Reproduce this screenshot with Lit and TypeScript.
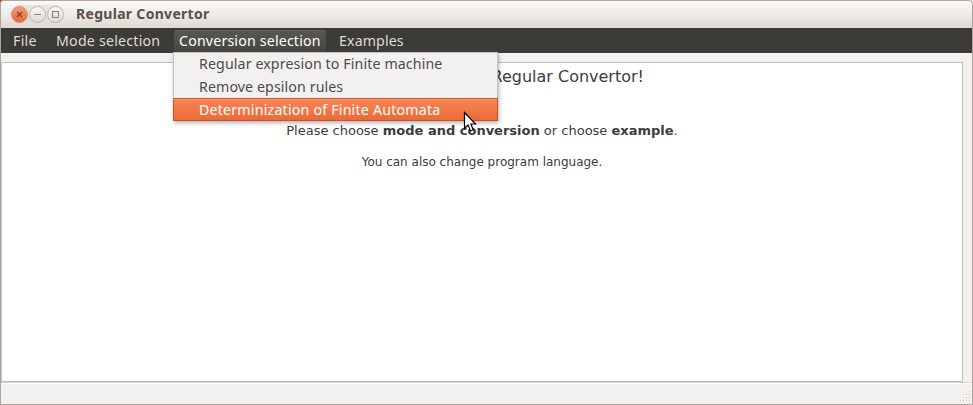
import { LitElement, html, css, svg } from "lit";
import { customElement } from "lit/decorators.js";
import { classMap } from "lit/directives/class-map.js";

interface Label {
  text: string;
  spacing: number;
}

const MENUS: Label[] = [
  { text: "File", spacing: 0.3 },
  { text: "Mode selection", spacing: 0.22 },
  { text: "Conversion selection", spacing: 0.17 },
  { text: "Examples", spacing: 0.12 },
];

const CONVERSIONS: Label[] = [
  { text: "Regular expresion to Finite machine", spacing: 0.115 },
  { text: "Remove epsilon rules", spacing: 0.1 },
  { text: "Determinization of Finite Automata", spacing: 0.205 },
];

const OPEN = 2;
const HOVERED = 2;

@customElement("title-bar")
export class TitleBar extends LitElement {
  static styles = css`
    :host {
      display: flex;
      align-items: flex-start;
      height: 27px;
      box-sizing: border-box;
      padding: 3px 0 0 9px;
      background: linear-gradient(#faf9f7, #f0ede9 45%, #ded7cf);
    }
    .buttons { display: block; flex: none; }
    .title {
      margin-left: 11px;
      font: bold 14px/20px "Noto Sans", sans-serif;
      letter-spacing: 0.3px;
      color: #5a514b;
      white-space: pre;
    }
  `;
  render() {
    return html`
      <svg class="buttons" width="55" height="20" viewBox="0 0 55 20">
        <defs>
          <linearGradient id="close" x1="0" y1="0" x2="0" y2="1">
            <stop offset="0" stop-color="#fa9878" />
            <stop offset="1" stop-color="#ee6535" />
          </linearGradient>
          <linearGradient id="plain" x1="0" y1="0" x2="0" y2="1">
            <stop offset="0" stop-color="#faf9f8" />
            <stop offset="1" stop-color="#ddd8d2" />
          </linearGradient>
        </defs>
        <rect x="0.5" y="1" width="54" height="19" rx="9" fill="#e2ddd7" opacity=".7" />
        ${[9.5, 27.5, 45.5].map(
          (x, i) => svg`<circle cx=${x} cy="10.5" r="8" fill=${i ? "url(#plain)" : "url(#close)"}
            stroke=${i ? "#bdb6ae" : "#c09a86"} stroke-width="1" />`
        )}
        <path d="M7 8l5 5M12 8l-5 5" stroke="#7a4530" stroke-width="1.2" />
        <path d="M24 10.5h7" stroke="#8a847d" stroke-width="1.1" />
        <rect x="42.5" y="7.5" width="6" height="6" fill="none" stroke="#8a847d" stroke-width="1.1" />
      </svg>
      <span class="title">Regular Convertor</span>
    `;
  }
}

@customElement("menu-bar")
export class MenuBar extends LitElement {
  static styles = css`
    :host {
      display: flex;
      height: 25px;
      box-sizing: border-box;
      padding: 2px 0 0 6px;
      background: #3c3b37;
      font: 14.2px/22px "Noto Sans", sans-serif;
      color: #dfdbd2;
    }
    .item {
      position: relative;
      box-sizing: border-box;
      height: 23px;
      padding-left: 6px;
      white-space: nowrap;
    }
    .m0 { width: 43px; }
    .m1 { width: 124px; }
    .m2 { width: 152px; margin-right: 7px; }
    .open {
      padding-left: 5px;
      border-radius: 3px 3px 0 0;
      background: linear-gradient(#585752, #464540);
      box-shadow: inset 0 1px #605f59;
      color: #fff;
    }
    .popup {
      position: absolute;
      z-index: 1;
      left: -1px;
      top: 22px;
      width: 325px;
      height: 69px;
      box-sizing: border-box;
      border: 1px solid #c4c1bc;
      background: #f2f1f0;
      box-shadow: 1px 2px 4px rgba(0, 0, 0, 0.3);
      color: #4c4c4c;
    }
    .row {
      box-sizing: border-box;
      height: 23px;
      padding-left: 25px;
      line-height: 21px;
    }
    .hovered {
      margin: -1px -1px 0;
      border: 1px solid #c55427;
      box-shadow: inset 0 1px #ff9a70;
      background: linear-gradient(#f98455, #ea6b39);
      color: #fff;
    }
    .cursor {
      position: absolute;
      left: 289px;
      top: 58px;
    }
  `;
  render() {
    return MENUS.map(
      (m, i) => html`<div class=${classMap({ item: true, [`m${i}`]: true, open: i === OPEN })}>
        <span style="letter-spacing:${m.spacing}px">${m.text}</span>${i === OPEN ? this.popup() : null}
      </div>`
    );
  }
  private popup() {
    return html`<div class="popup">
      ${CONVERSIONS.map(
        (c, i) => html`<div class=${classMap({ row: true, hovered: i === HOVERED })}>
          <span style="letter-spacing:${c.spacing}px">${c.text}</span>
        </div>`
      )}
      <svg class="cursor" width="14" height="22" viewBox="0 0 14 22">
        <path d="M1.5 1.5V17.5L5 14L7.6 20L10.3 18.8L7.8 13H12.5Z" fill="#fff" stroke="#000" stroke-width="1.2" />
      </svg>
    </div>`;
  }
}

@customElement("app-root")
export class AppRoot extends LitElement {
  static styles = css`
    :host {
      display: block;
      width: 973px;
      height: 405px;
      background: linear-gradient(90deg, #b5431c 6px, #d9d9d9 6px) top / 100% 6px no-repeat, #aca49d;
    }
    .window {
      display: flex;
      flex-direction: column;
      height: 405px;
      box-sizing: border-box;
      border: 1px solid #aca49d;
      border-top-color: #b9a79b;
      border-radius: 4px 5px 0 0;
      overflow: hidden;
      background: #f2f1f0;
    }
    .page {
      box-sizing: border-box;
      width: 962px;
      height: 320px;
      margin-top: 9px;
      border: 1px solid #bfbdba;
      border-left: 1px solid #c8c5c2;
      background: #fff;
      text-align: center;
      font-family: "DejaVu Sans", sans-serif;
      color: #3c3c3c;
    }
    .heading {
      margin: 4px 0 0;
      padding-right: 318px;
      text-align: right;
      font-size: 16px;
      line-height: 19px;
      font-weight: normal;
    }
    .choose { margin: 37px 0 0; font-size: 13px; line-height: 16px; }
    .language { margin: 15px 0 0; font-size: 12px; line-height: 16px; }
    .status {
      display: flex;
      flex: 1;
      justify-content: flex-end;
      align-items: flex-end;
      border-top: 1px solid #d4d1cd;
      box-shadow: inset 0 1px #fff;
    }
  `;
  render() {
    const dots: [number, number][] = [];
    for (let r = 0; r < 4; r++) for (let c = 3 - r; c < 4; c++) dots.push([c * 3, r * 3]);
    return html`
      <div class="window">
        <title-bar></title-bar>
        <menu-bar></menu-bar>
        <main class="page">
          <h1 class="heading">Regular Convertor!</h1>
          <p class="choose">Please choose <b>mode and conversion</b> or choose <b>example</b>.</p>
          <p class="language">You can also change program language.</p>
        </main>
        <footer class="status">
          <svg width="12" height="13" viewBox="0 0 12 13">
            ${dots.map(
              ([x, y]) => svg`<rect x=${x + 1} y=${y + 1} width="1" height="1" fill="#fff" />
                <rect x=${x} y=${y} width="1" height="1" fill="#c2beb9" />`
            )}
          </svg>
        </footer>
      </div>
    `;
  }
}
